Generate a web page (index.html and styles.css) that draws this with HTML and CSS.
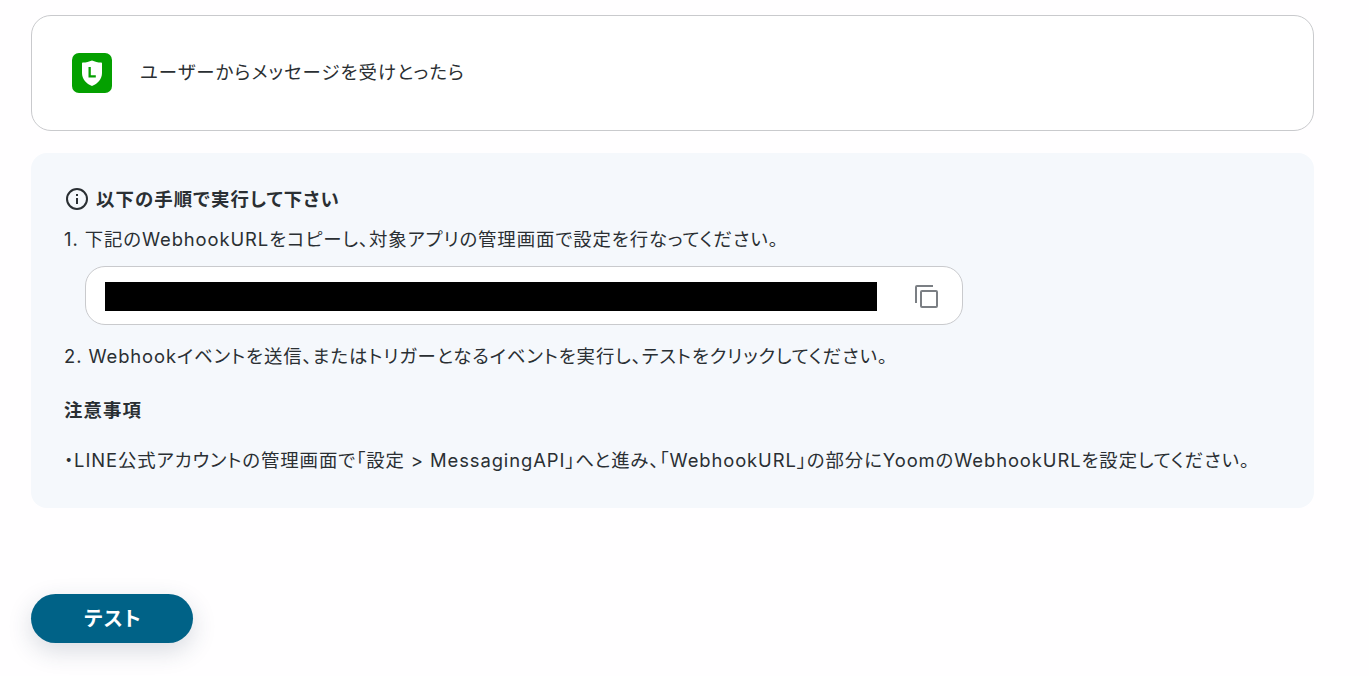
FILE: index.html
```html
<!DOCTYPE html>
<html lang="ja">
<head>
<meta charset="utf-8">
<title>Webhook</title>
<link rel="stylesheet" href="styles.css">
</head>
<body>
<main class="page">
  <section class="trigger">
    <svg class="line-icon" viewBox="0 0 40 40" width="40" height="40" aria-hidden="true">
      <rect width="40" height="40" rx="7" fill="#04a000"/>
      <path d="M20 7.500c2.800 1.300 6 2 9 2.100.6 0 1 .4 1 1v9.400c0 6-4.400 10.800-10 13-5.600-2.200-10-7-10-13v-9.400c0-.6.4-1 1-1 3-.1 6.200-.8 9-2.100z" fill="#fff"/>
      <path d="M16.500 14h2.300v8.200h5v2.200h-7.300z" fill="#04a000"/>
    </svg>
    <span class="trigger-label">ユーザーからメッセージを受けとったら</span>
  </section>

  <section class="panel">
    <h2 class="panel-title">
      <svg class="info-icon" viewBox="0 0 24 24" width="24" height="24" aria-hidden="true">
        <circle cx="12" cy="12" r="10" fill="none" stroke="#2a2f33" stroke-width="2"/>
        <rect x="11" y="11" width="2" height="6" fill="#2a2f33"/>
        <rect x="11" y="7" width="2" height="2" fill="#2a2f33"/>
      </svg>
      以下の手順で実行して下さい
    </h2>
    <p class="step step-one">1. 下記のWebhookURLをコピーし、対象アプリの管理画面で設定を行なってください。</p>
    <div class="url-field">
      <div class="redacted"></div>
      <svg class="copy-icon" viewBox="0 0 23 23" width="23" height="23" aria-hidden="true">
        <path d="M1 18V2a1 1 0 0 1 1-1h16" fill="none" stroke="#7b7f84" stroke-width="2"/>
        <rect x="6" y="6" width="16" height="16" rx="1" fill="none" stroke="#7b7f84" stroke-width="2"/>
      </svg>
    </div>
    <p class="step step-two">2. Webhookイベントを送信、またはトリガーとなるイベントを実行し、テストをクリックしてください。</p>
    <h3 class="notes-title">注意事項</h3>
    <p class="step note">・LINE公式アカウントの管理画面で「設定 &gt; MessagingAPI」へと進み、「WebhookURL」の部分にYoomのWebhookURLを設定してください。</p>
  </section>

  <div class="actions">
    <button class="test-button" type="button">テスト</button>
  </div>
</main>
</body>
</html>
```

FILE: styles.css
```css
* {
  box-sizing: border-box;
}

html,
body {
  margin: 0;
  height: 100%;
  background: #fffeff;
}

body {
  font-family: Inter, "Noto Sans CJK JP", sans-serif;
  font-feature-settings: "palt";
  color: #2a2f33;
  font-size: 18.4px;
  letter-spacing: 0.91px;
  overflow: hidden;
}

.page {
  width: 1369px;
  height: 676px;
  padding: 15px 55px 0 31px;
  display: flex;
  flex-direction: column;
}

.trigger {
  height: 116px;
  border: 1px solid #c9cacd;
  border-radius: 20px;
  background: #fff;
  padding: 0 40px;
  display: flex;
  align-items: center;
  gap: 28px;
}

.line-icon {
  flex: none;
  margin-top: -1px;
}

.trigger-label {
  margin-top: -5px;
  letter-spacing: 1.05px;
}

.panel {
  margin-top: 22px;
  height: 355px;
  padding: 32px 33px 0;
  border-radius: 16px;
  background: #f5f8fc;
}

.panel-title {
  margin: 0;
  height: 28px;
  display: flex;
  align-items: center;
  gap: 7px;
  font-size: 18.4px;
  font-weight: 700;
  letter-spacing: 1.1px;
  line-height: 28px;
}

.info-icon {
  flex: none;
  margin-left: 1px;
}

.step {
  margin: 0;
  line-height: 28px;
}

.step-one {
  margin-top: 12px;
}

.url-field {
  width: 878px;
  height: 59px;
  margin: 13px 0 0 21px;
  padding: 2px 24px 0 19px;
  border: 1px solid #c9cacd;
  border-radius: 20px;
  background: #fff;
  display: flex;
  align-items: center;
  justify-content: space-between;
}

.redacted {
  width: 772px;
  height: 29px;
  background: #000;
}

.copy-icon {
  flex: none;
}

.step-two {
  margin-top: 17px;
}

.notes-title {
  margin: 26px 0 0;
  font-size: 18.4px;
  font-weight: 700;
  letter-spacing: 1.1px;
  line-height: 28px;
}

.note {
  margin-top: 22px;
}

.actions {
  margin-top: 86px;
}

.test-button {
  width: 162px;
  height: 49px;
  padding: 0 0 3px 2px;
  border: 0;
  border-radius: 25px;
  background: #006287;
  color: #fff;
  font: inherit;
  font-size: 20px;
  font-weight: 700;
  letter-spacing: 1.2px;
  box-shadow: 0 8px 24px rgba(40, 60, 90, 0.18);
}
```
